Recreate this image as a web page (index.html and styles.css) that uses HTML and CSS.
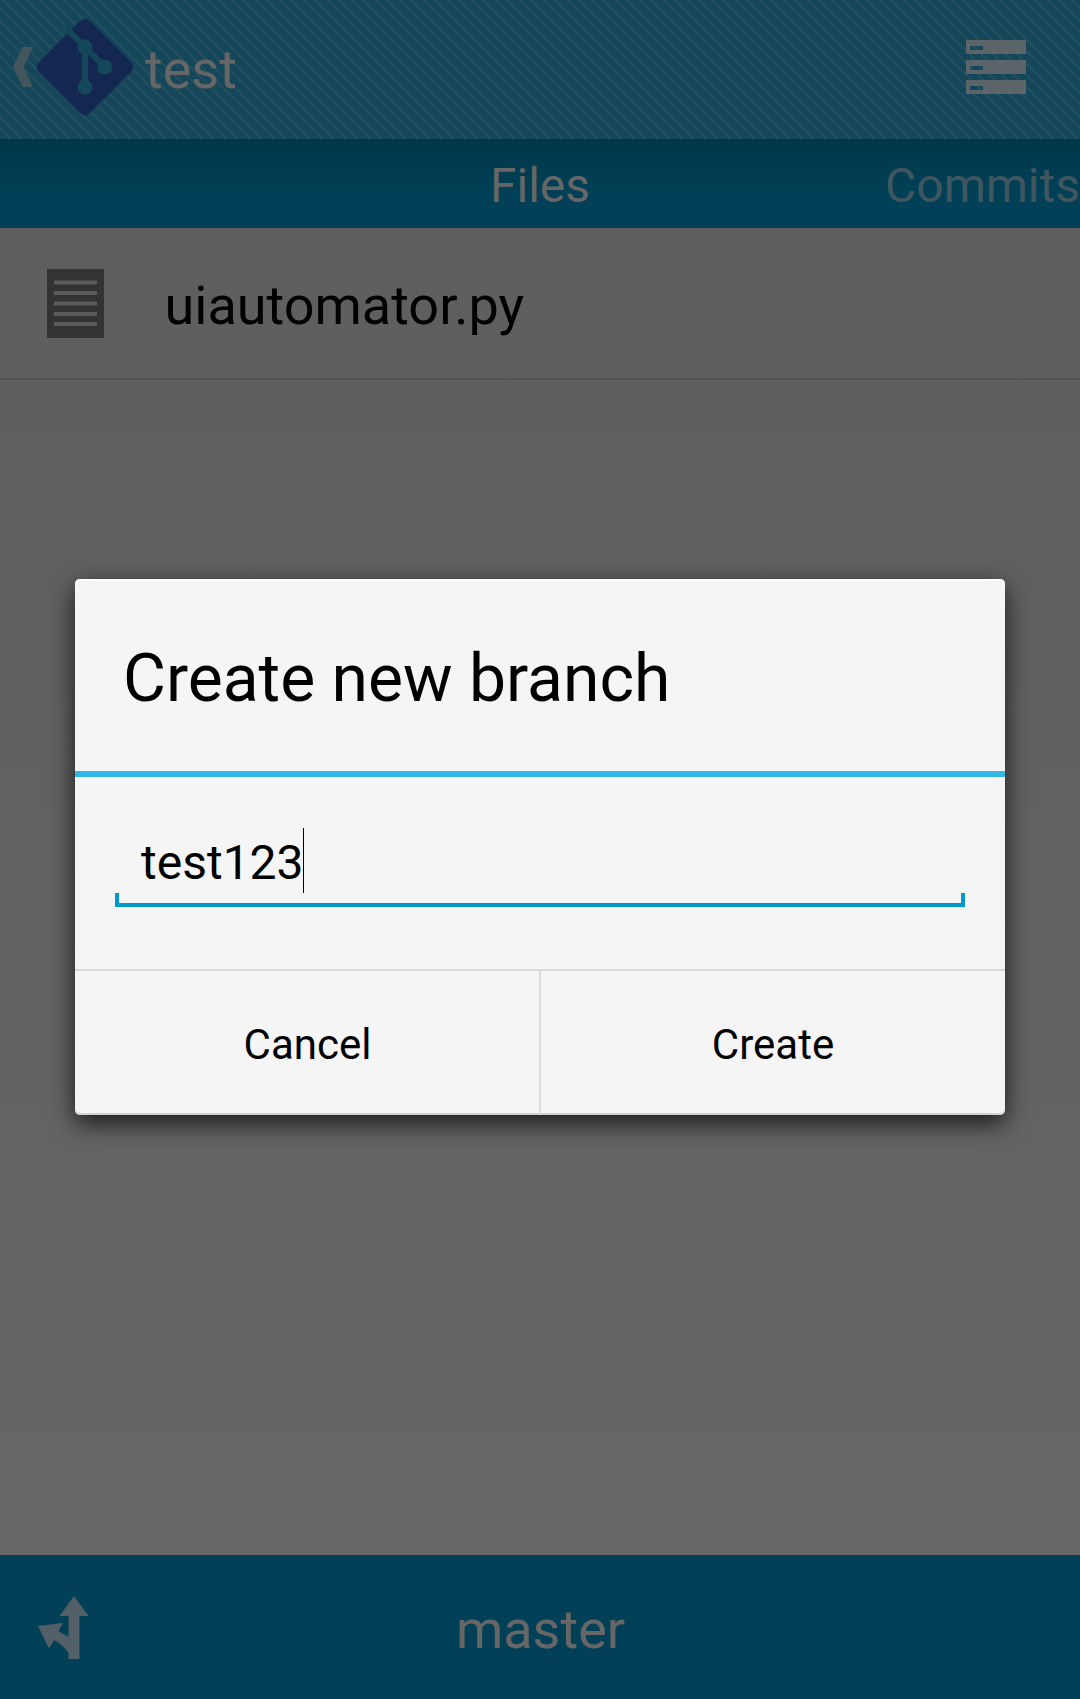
FILE: index.html
```html
<!DOCTYPE html>
<html lang="en">
<head>
<meta charset="utf-8">
<title>test</title>
<link rel="stylesheet" href="styles.css">
</head>
<body>
<div class="app">
  <header class="bar">
    <svg class="back" width="21" height="44" viewBox="0 0 22 44"><path d="M10 1H21L11 22L21 43H10L0 22Z" fill="#43565e"/></svg>
    <svg class="logo" width="98" height="98" viewBox="0 0 98 98">
      <path d="M43.500 3.500Q49 -1.500 54.500 3.500L94.500 43.500Q99.500 49 94.500 54.500L54.500 94.500Q49 99.500 43.500 94.500L3.500 54.500Q-1.500 49 3.500 43.500Z" fill="#142750"/>
      <path stroke="#15475b" stroke-width="6" fill="none" d="M29 9L69 49M49 30V70"/>
      <g fill="#15475b"><circle cx="49" cy="29" r="7.500"/><circle cx="69" cy="49" r="7.500"/><circle cx="49" cy="69" r="7.500"/></g>
    </svg>
    <h1 class="repo">test</h1>
    <svg class="menu" width="60" height="54" viewBox="0 0 60 54"><path fill="#5b6469" fill-rule="evenodd" d="M0 0H60V14H0ZM4 6V10H17V6ZM0 20H60V34H0ZM4 26V30H17V26ZM0 40H60V54H0ZM4 46V50H17V46Z"/></svg>
  </header>
  <nav class="tabs"><span></span><span class="tab active">Files</span><span class="tab next">Commits</span></nav>
  <main class="files">
    <div class="row">
      <svg class="doc" width="57" height="69" viewBox="0 0 57 69"><path fill="#333" d="M0 0H57V69H0Z"/><path stroke="#5c5c5c" stroke-width="4" d="M7 13.500H50M7 24H50M7 34.500H50M7 45H50M7 55H50"/></svg>
      <span>uiautomator.py</span>
    </div>
  </main>
  <footer class="branch">
    <svg class="fork" width="51" height="63" viewBox="0 0 51 63"><path fill="#535f66" d="M36 0L50.500 20H41.500V63H30.500V57Q25 49 16 44L11 52.500L0 30L25 27L20.500 35L30.500 41V20H21.500Z"/></svg>
    <span class="name">master</span>
  </footer>
</div>
<section class="dialog">
  <h2 class="title">Create new branch</h2>
  <div class="body"><div class="field"><span class="value">test123</span><i class="caret"></i></div></div>
  <div class="actions"><button>Cancel</button><button>Create</button></div>
</section>
</body>
</html>
```
FILE: styles.css
```css
* { box-sizing: border-box; }
body { margin: 0; font-family: Roboto, "Noto Sans", sans-serif; color: #000; }
h1, h2 { margin: 0; font-weight: 400; }
svg { display: block; flex: none; }
.app { height: 1699px; display: flex; flex-direction: column; }
.bar {
  height: 139px; flex: none; display: flex; align-items: center; padding: 0 54px 5px 13px;
  background: repeating-linear-gradient(45deg, #15475b 0 5.800px, #264f5f 7px 8px, #15475b 8.485px);
}
.logo { margin-left: 2px; }
.repo { font-size: 54px; line-height: 64px; color: #666; margin: 6px auto 0 11px; }
.tabs {
  height: 89px; flex: none; display: grid; grid-template-columns: 1fr auto 1fr; align-items: center;
  font-size: 48px; padding-top: 4px;
  background: linear-gradient(#003749, #014056 60%, #014057);
}
.active { color: #666; }
.next { color: #40565f; justify-self: end; }
.files { flex: 1; background: linear-gradient(#5e5e5e, #666); }
.row { height: 152px; display: flex; align-items: center; gap: 61px; padding: 0 0 0 46.500px; font-size: 54px; border-bottom: 2px solid #555; }
.row span { padding-top: 4px; }
.branch {
  height: 144px; flex: none; display: grid; grid-template-columns: 1fr auto 1fr; align-items: center;
  padding: 0 37px 0 38px; font-size: 54px; color: #666; background: #014057;
}
.name { padding-top: 4px; }
.dialog {
  position: absolute; left: 75px; top: 579px; width: 930px; height: 536px;
  display: flex; flex-direction: column; background: #f5f5f5; border-radius: 5px;
  box-shadow: 0 8px 24px rgba(0,0,0,.75), inset 0 2px #fff, inset 0 -2px #d0d2d2;
}
.title { height: 198px; font-size: 66px; line-height: 200px; padding-left: 48px; border-bottom: 6px solid #33b5e5; }
.body { flex: 1; padding: 42px 40px 0; }
.field {
  height: 88px; padding: 9px 0 0 26px; display: flex; align-items: flex-start; font-size: 48px;
  background: linear-gradient(#09c, #09c) 0 100% / 100% 4px no-repeat,
    linear-gradient(#09c, #09c) 0 100% / 4px 14px no-repeat,
    linear-gradient(#09c, #09c) 100% 100% / 4px 14px no-repeat;
}
.value { line-height: 70px; }
.caret { width: 1px; height: 65px; margin-left: -1px; background: #000; }
.actions { height: 146px; display: grid; grid-template-columns: 1fr 1fr; border-top: 2px solid #d9dbdb; }
.actions button { border: 0; background: none; font: 42px Roboto, sans-serif; color: #000; padding: 2px 0 0; }
.actions button + button { border-left: 2px solid #d9dbdb; margin-left: -1px; }
```
